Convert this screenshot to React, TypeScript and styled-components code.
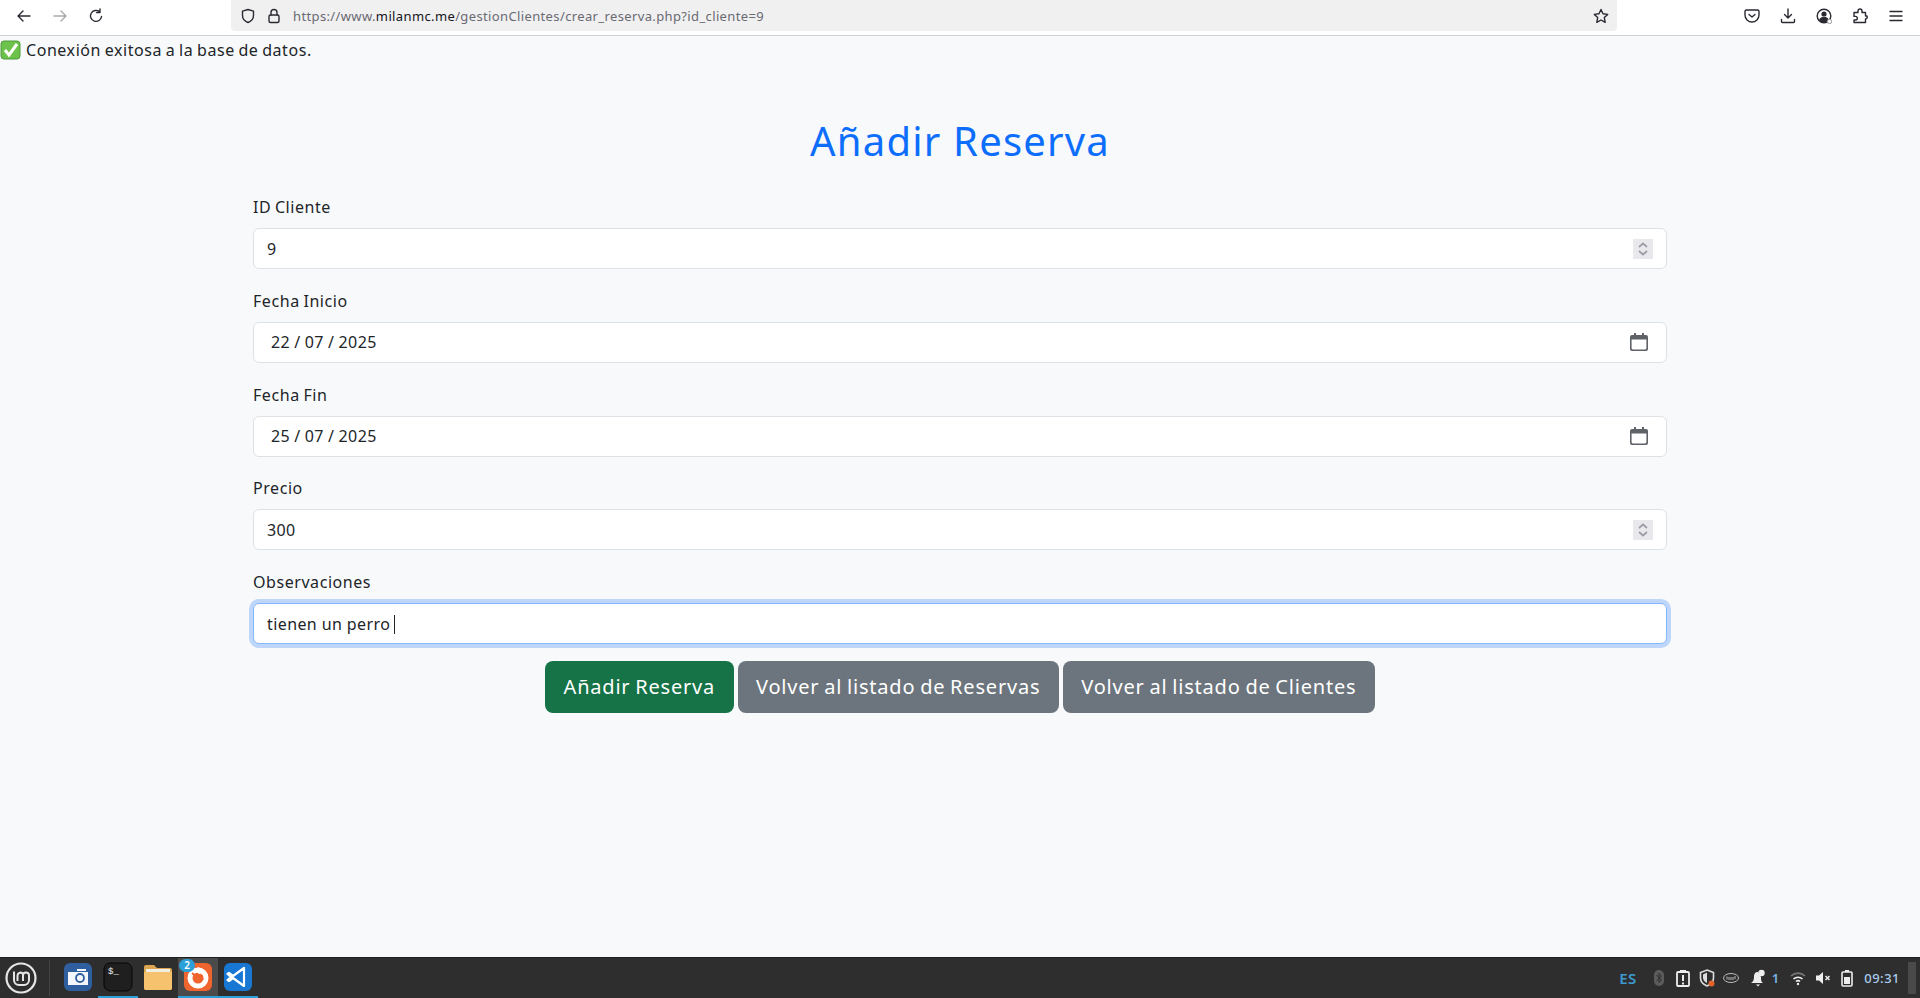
import React from "react";
import styled, { createGlobalStyle } from "styled-components";

const Global = createGlobalStyle`
  html, body { margin: 0; padding: 0; height: 100%; }
  body { font-family: "Noto Sans", "Open Sans", "Liberation Sans", sans-serif; background: #f8f9fa; }
`;

const Page = styled.div`
  width: 1920px; height: 998px; display: flex; flex-direction: column; overflow: hidden;
`;
const Toolbar = styled.header`
  height: 36px; flex: none; box-sizing: border-box; background: #fff; border-bottom: 1px solid #cfcfd2;
  display: flex; align-items: flex-start; padding-left: 16px; color: #2b2a33;
`;
const NavGroup = styled.div`
  display: flex; gap: 20px; height: 31px; align-items: center; width: 215px; flex: none;
  svg { width: 16px; height: 16px; }
`;
const UrlBar = styled.div`
  width: 1386px; height: 31px; flex: none; background: #f0f0f1; border-radius: 0 0 4px 4px;
  display: flex; align-items: center; padding: 0 8px 0 9px; box-sizing: border-box; gap: 10px;
  svg { width: 16px; height: 16px; flex: none; }
`;
const UrlText = styled.div`
  font-size: 13px; color: #6a6a71; flex: 1; margin-left: 1px; white-space: nowrap;
  letter-spacing: 0.37px;
  b { font-weight: 400; color: #15141a; }
`;
const ToolIcons = styled.div`
  display: flex; margin-left: 127px; gap: 20px; height: 31px; align-items: center;
  svg { width: 16px; height: 16px; flex: none; }
`;
const Content = styled.main`
  flex: 1; min-height: 0; display: flex; flex-direction: column; background: #f8f9fa; color: #212529;
`;
const Status = styled.div`
  font-size: 16px; line-height: 24px; height: 24px; margin-top: 2px; display: flex; align-items: center;
  letter-spacing: 0.035em; word-spacing: -1px; white-space: nowrap;
`;
const Check = styled.span`
  width: 22px; height: 20px; margin-right: 4px; display: flex; flex: none;
  svg { width: 22px; height: 20px; }
`;
const Title = styled.h1`
  margin: 55px 0 0; font-size: 40px; line-height: 48px; font-weight: 400; color: #0d6efd; text-align: center;
  letter-spacing: 0.03em;
`;
const Form = styled.form`
  width: 1414px; margin: 29px auto 0; display: flex; flex-direction: column;
`;
const Group = styled.div`
  margin-bottom: 18.75px; display: flex; flex-direction: column;
`;
const Label = styled.label`
  font-size: 16px; line-height: 26px; margin-bottom: 8px; letter-spacing: 0.035em; word-spacing: -1px;
`;
const Input = styled.div<{ $focus?: boolean }>`
  height: 41px; box-sizing: border-box; background: #fff; border-radius: 6px;
  border: 1px solid ${p => (p.$focus ? "#86b7fe" : "#dee2e6")};
  box-shadow: ${p => (p.$focus ? "0 0 0 4px rgba(13,110,253,.25)" : "none")};
  display: flex; align-items: center; padding: 0 13px; font-size: 16px; color: #212529;
  letter-spacing: 0.4px;
`;
const Value = styled.span<{ $date?: boolean }>`
  flex: 1; white-space: pre; padding-left: ${p => (p.$date ? "4px" : "0")};
  word-spacing: ${p => (p.$date ? "-0.4px" : "0")};
`;
const Caret = styled.span`
  display: inline-block; width: 1px; height: 19px; background: #212529; margin-left: 4px; vertical-align: -4px;
`;
const Spin = styled.span`
  width: 20px; height: 20px; background: #e9e9ed; display: flex;
  svg { width: 20px; height: 20px; }
`;
const Cal = styled.span`
  width: 18px; height: 18px; display: flex; margin-right: 5px;
  svg { width: 18px; height: 18px; }
`;
const Buttons = styled.div`
  display: flex; justify-content: center; gap: 4px; margin-top: -2px;
`;
const Btn = styled.button<{ $bg: string }>`
  height: 52px; border: 0; border-radius: 8px; padding: 0 18.5px; background: ${p => p.$bg}; color: #fff;
  font: 400 20px "Noto Sans", "Open Sans", sans-serif; letter-spacing: 0.04em; word-spacing: -1.2px; white-space: nowrap;
`;
const Taskbar = styled.footer`
  height: 41px; flex: none; background: #2e2e2e; border-top: 1px solid #1e1e1e; box-sizing: border-box;
  display: flex; align-items: stretch; color: #fff;
`;
const Menu = styled.div`
  width: 50px; flex: none; box-sizing: border-box; display: flex; align-items: center; padding-left: 5px;
  border-right: 1px solid #444; margin: 2px 0;
  svg { width: 32px; height: 32px; }
`;
const Apps = styled.div`
  display: flex; margin-left: 8px;
`;
const App1 = styled.div<{ $on?: boolean; $hover?: boolean }>`
  width: 40px; position: relative; display: flex; align-items: center; justify-content: center;
  background: ${p => (p.$hover ? "#4b4b4b" : "transparent")};
  border-bottom: 2px solid ${p => (p.$on ? "#2a9fd8" : "transparent")};
  svg { width: 30px; height: 30px; }
`;
const Badge = styled.span`
  position: absolute; top: 1px; left: 1px; width: 16px; height: 13px; border-radius: 7px; background: #2a9fd8;
  color: #fff; font-size: 10px; line-height: 13px; text-align: center; font-weight: 600;
`;
const Tray = styled.div`
  margin-left: auto; display: flex; align-items: center; padding-right: 4px;
`;
const Lang = styled.span`
  color: #3d9ad1; font-size: 15px; font-weight: 600; margin-right: 14px; letter-spacing: .5px;
`;
const TrayIcons = styled.div`
  display: flex; align-items: center; gap: 8px;
  svg { width: 16px; height: 18px; flex: none; }
  svg:nth-child(5) { margin-left: 3px; }
  svg:nth-child(8) { margin-left: 1px; }
`;
const Count = styled.span`
  color: #7ab3e6; font-size: 13px; font-weight: 600; margin: 0 3px 0 -2px;
`;
const Clock = styled.span`
  color: #a9cdf0; font-size: 13px; font-weight: 500; margin-left: 9px; letter-spacing: .5px;
`;
const Edge = styled.span`
  width: 8px; height: 32px; background: #4a4a4a; margin-left: 8px;
`;

const st = { fill: "none", stroke: "currentColor", strokeWidth: 1.4, strokeLinecap: "round", strokeLinejoin: "round" } as const;

const SpinIcon = () => (
  <svg viewBox="0 0 20 20" fill="none" stroke="#9c9ca8" strokeWidth="1.700">
    <path d="M6 8l4-3.500L14 8M6 12l4 3.500 4-3.500" />
  </svg>
);
const CalIcon = () => (
  <svg viewBox="0 0 18 18">
    <path fill="#5f6368" d="M4 0h2v2h6V0h2v2h2a2 2 0 0 1 2 2v12a2 2 0 0 1-2 2H2a2 2 0 0 1-2-2V4a2 2 0 0 1 2-2h2zM1.600 6.500V15c0 .8.600 1.400 1.400 1.400h12c.8 0 1.400-.6 1.400-1.400V6.500z" />
  </svg>
);

function Field({ label, value, kind }: { label: string; value: string; kind: "number" | "date" }) {
  return (
    <Group>
      <Label>{label}</Label>
      <Input>
        <Value $date={kind === "date"}>{value}</Value>
        {kind === "number" ? <Spin><SpinIcon /></Spin> : <Cal><CalIcon /></Cal>}
      </Input>
    </Group>
  );
}

export default function App() {
  return (
    <Page>
      <Global />
      <Toolbar>
        <NavGroup>
          <svg viewBox="0 0 16 16" {...st}><path d="M14 8H2.500M7 3L2 8l5 5" /></svg>
          <svg viewBox="0 0 16 16" {...st} style={{ opacity: 0.4 }}><path d="M2 8h11.500M9 3l5 5-5 5" /></svg>
          <svg viewBox="0 0 16 16" {...st}><path d="M13.500 8.500A5.500 5.500 0 1 1 11.500 3.600M12 1v3.500H8.500" /></svg>
        </NavGroup>
        <UrlBar>
          <svg viewBox="0 0 16 16" {...st}><path d="M8 1.500l5.500 1.700v4.300c0 3.500-2.500 5.800-5.500 7-3-1.200-5.500-3.500-5.500-7V3.200z" /></svg>
          <svg viewBox="0 0 16 16" {...st}><rect x="3" y="7" width="10" height="7.500" rx="1.500" /><path d="M5 7V4.500a3 3 0 0 1 6 0V7" /></svg>
          <UrlText>https://www.<b>milanmc.me</b>/gestionClientes/crear_reserva.php?id_cliente=9</UrlText>
          <svg viewBox="0 0 16 16" {...st}><path d="M8 1.500l2 4.300 4.700.6-3.400 3.200.9 4.700L8 12l-4.200 2.300.9-4.700L1.300 6.400 6 5.800z" /></svg>
        </UrlBar>
        <ToolIcons>
          <svg viewBox="0 0 16 16" {...st}><path d="M2.500 2h11A1.500 1.500 0 0 1 15 3.500V7a7 7 0 0 1-14 0V3.500A1.500 1.500 0 0 1 2.500 2z" /><path d="M5 6.500l3 2.500 3-2.500" /></svg>
          <svg viewBox="0 0 16 16" {...st}><path d="M8 1v9M4.500 6.500L8 10l3.500-3.500M1.500 11.500v2c0 .6.400 1 1 1h11c.6 0 1-.4 1-1v-2" /></svg>
          <svg viewBox="0 0 16 16"><circle cx="8" cy="8" r="6.800" fill="none" stroke="#2b2a33" strokeWidth="1.400" /><circle cx="8" cy="6" r="2.600" fill="#2b2a33" /><path fill="#2b2a33" d="M3 12c1-2.500 3-3 5-3s4 .5 5 3l-2 2H5z" /><circle cx="13.500" cy="13.500" r="2.200" fill="#fff" stroke="#9a9a9a" /></svg>
          <svg viewBox="0 0 16 16" {...st}><path d="M6 3.500V3a2 2 0 0 1 4 0v1.500h3.500V8H15v0a2 2 0 0 1-1.500 3v3.500H2V12h1.500a1.800 1.800 0 0 0 0-3.600H2V4.500h4z" /></svg>
          <svg viewBox="0 0 16 16" {...st}><path d="M2 3.500h12M2 8h12M2 12.500h12" /></svg>
        </ToolIcons>
      </Toolbar>
      <Content>
        <Status>
          <Check>
            <svg viewBox="0 0 22 20"><rect x="1" y="1" width="19" height="18" rx="3" fill="#6cc24a" stroke="#4e9a3c" /><path d="M5 10l4 5 8-11" fill="none" stroke="#fff" strokeWidth="3" /></svg>
          </Check>
          Conexión exitosa a la base de datos.
        </Status>
        <Title>Añadir Reserva</Title>
        <Form>
          <Field label="ID Cliente" value="9" kind="number" />
          <Field label="Fecha Inicio" value="22 / 07 / 2025" kind="date" />
          <Field label="Fecha Fin" value="25 / 07 / 2025" kind="date" />
          <Field label="Precio" value="300" kind="number" />
          <Group>
            <Label>Observaciones</Label>
            <Input $focus>
              <Value>tienen un perro<Caret /></Value>
            </Input>
          </Group>
          <Buttons>
            <Btn type="button" $bg="#157347">Añadir Reserva</Btn>
            <Btn type="button" $bg="#6c757d">Volver al listado de Reservas</Btn>
            <Btn type="button" $bg="#6c757d">Volver al listado de Clientes</Btn>
          </Buttons>
        </Form>
      </Content>
      <Taskbar>
        <Menu>
          <svg viewBox="0 0 32 32" fill="none" stroke="#e6e6e6">
            <circle cx="16" cy="16" r="14.500" strokeWidth="2.200" />
            <path strokeWidth="2" d="M9 9.500V18a5 5 0 0 0 5 5h5a5 5 0 0 0 5-5v-4.500a3 3 0 0 0-6 0V19M12.500 19v-5.500a3 3 0 0 1 5.500-1.500" />
          </svg>
        </Menu>
        <Apps>
          <App1>
            <svg viewBox="0 0 30 30"><rect x="1" y="1" width="28" height="28" rx="6" fill="#2f5f9e" /><rect x="5" y="10" width="20" height="13" fill="#f3f6fa" /><rect x="14" y="7" width="9" height="2" fill="#f3f6fa" /><circle cx="17" cy="16" r="4" fill="#f3f6fa" stroke="#2f5f9e" strokeWidth="1.800" /></svg>
          </App1>
          <App1 $on>
            <svg viewBox="0 0 30 30"><rect x="1" y="1" width="28" height="28" rx="6" fill="#1f1f1f" stroke="#050505" /><text x="5" y="12" fill="#f2f2f2" fontSize="9" fontFamily="Liberation Mono, monospace">$_</text></svg>
          </App1>
          <App1>
            <svg viewBox="0 0 30 30"><path d="M1 5a2 2 0 0 1 2-2h8l3 3h13a2 2 0 0 1 2 2v18a2 2 0 0 1-2 2H3a2 2 0 0 1-2-2z" fill="#dba64f" /><rect x="3" y="7" width="24" height="4" fill="#f2ede3" /><path d="M1 10h28v16a2 2 0 0 1-2 2H3a2 2 0 0 1-2-2z" fill="#f6c26e" /></svg>
          </App1>
          <App1 $on $hover>
            <svg viewBox="0 0 30 30"><rect x="1" y="1" width="28" height="28" rx="6" fill="#f0642d" /><circle cx="15" cy="16" r="8" fill="none" stroke="#fff" strokeWidth="5" /><path d="M15 5l6 3-3 5-5-3z" fill="#fff" /><path d="M9 11l5 4 3-2 3 5" fill="none" stroke="#f0642d" strokeWidth="2" /></svg>
            <Badge>2</Badge>
          </App1>
          <App1 $on>
            <svg viewBox="0 0 30 30"><rect x="1" y="1" width="28" height="28" rx="6" fill="#1877d2" /><path d="M21 6v18L10 16l-4 3-1.500-1L8 15l-3.500-3L6 11l4 3z" fill="none" stroke="#fff" strokeWidth="2.200" strokeLinejoin="round" /></svg>
          </App1>
        </Apps>
        <Tray>
          <Lang>ES</Lang>
          <TrayIcons>
            <svg viewBox="0 0 16 18"><rect x="3" y="1" width="10" height="16" rx="5" fill="#5c5c5c" /><path d="M5.500 6l5 5L8 13.500v-9L10.500 7l-5 5" fill="none" stroke="#2e2e2e" /></svg>
            <svg viewBox="0 0 16 18"><rect x="2" y="3" width="12" height="14" rx="1" fill="none" stroke="#eee" strokeWidth="1.800" /><rect x="5" y="1" width="6" height="3" fill="#eee" /><path d="M8 6v6M8 13.500v2" stroke="#eee" strokeWidth="2" /></svg>
            <svg viewBox="0 0 16 18"><path d="M8 1l6.500 2.500V9c0 4-3 6.500-6.500 8-3.500-1.500-6.500-4-6.500-8V3.500z" fill="none" stroke="#ddd" strokeWidth="1.600" /><path d="M8 3.500V14c-2.500-1-4-3-4-5.500v-3z" fill="#ddd" /><circle cx="12.500" cy="14.500" r="3" fill="#e4642c" /></svg>
            <svg viewBox="0 0 16 18"><ellipse cx="8" cy="9" rx="7.500" ry="4.500" fill="none" stroke="#bbb" /><path d="M4 7.500v3M6 8v3M8 8v3M10 8v3M12 7v3" stroke="#bbb" /></svg>
            <svg viewBox="0 0 16 18"><path d="M8 3c-3 0-4 2-4 5 0 3-1 5-3 6h12c-2-1-2-3-2-6" fill="#eee" /><circle cx="11.500" cy="4" r="3.200" fill="#eee" /><path d="M6 15.500h4l-2 2z" fill="#eee" /></svg>
            <Count>1</Count>
            <svg viewBox="0 0 16 18" fill="none" strokeWidth="1.600"><path d="M1 7a10 10 0 0 1 14 0" stroke="#777" /><path d="M3.500 10a6.500 6.500 0 0 1 9 0" stroke="#eee" /><path d="M6 12.500a3 3 0 0 1 4 0" stroke="#eee" /><circle cx="8" cy="15" r="1.200" fill="#eee" /></svg>
            <svg viewBox="0 0 16 18"><path d="M1 6.500h3L8 3v12l-4-3.500H1z" fill="#eee" /><path d="M10.500 7l4 4M14.500 7l-4 4" stroke="#eee" strokeWidth="1.500" /></svg>
            <svg viewBox="0 0 16 18"><rect x="3" y="3" width="10" height="14" rx="1" fill="none" stroke="#eee" strokeWidth="1.600" /><rect x="6" y="1" width="4" height="2" fill="#eee" /><rect x="5" y="8" width="6" height="7" fill="#eee" /></svg>
          </TrayIcons>
          <Clock>09:31</Clock>
          <Edge />
        </Tray>
      </Taskbar>
    </Page>
  );
}
